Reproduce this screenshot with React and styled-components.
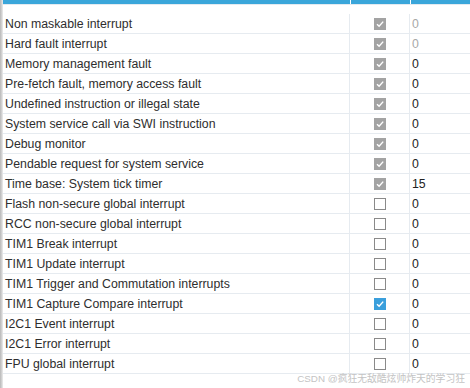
import React from 'react';
import styled, { createGlobalStyle } from 'styled-components';

const GlobalStyle = createGlobalStyle`
  html, body {
    margin: 0;
    padding: 0;
    background: #ffffff;
  }
  body {
    font-family: 'Liberation Sans', Arial, sans-serif;
  }
`;

const Page = styled.div`
  position: relative;
  width: 470px;
  height: 388px;
  overflow: hidden;
  display: flex;
  background: #ffffff;
`;

const Edge = styled.div`
  width: 3px;
  flex-shrink: 0;
  background: linear-gradient(to right, #b8b8b8, #d4d4d4 60%, #eeeeee);
`;

const Main = styled.div`
  flex: 1;
  display: flex;
  flex-direction: column;
`;

const HeaderBar = styled.div`
  display: grid;
  grid-template-columns: 347px 59px 1fr;
  column-gap: 1px;
  height: 4px;
  border-bottom: 1px solid #e3eaf0;
  background: #ffffff;
`;

const HeaderCell = styled.div`
  background: #3aa6da;
`;

const Spacer = styled.div`
  height: 9px;
`;

const Row = styled.div`
  display: grid;
  grid-template-columns: 347px 60px 1fr;
  height: 20px;
  border-bottom: 1px solid #e6ebf0;
  box-sizing: border-box;
`;

const NameCell = styled.div`
  display: flex;
  align-items: center;
  padding: 1px 0 0 2px;
  font-size: 12.3px;
  color: #2e2e2e;
  border-right: 1px solid #e6ebf0;
  white-space: nowrap;
`;

const CheckCell = styled.div`
  display: flex;
  align-items: center;
  justify-content: center;
  border-right: 1px solid #e6ebf0;
`;

const PrioCell = styled.div`
  display: flex;
  align-items: center;
  padding: 1px 0 0 2px;
  font-size: 12.3px;
  color: ${(p) => (p.$disabled ? '#a8a8a8' : '#222222')};
`;

const Box = styled.div`
  width: 12px;
  height: 12px;
  box-sizing: border-box;
  display: flex;
  align-items: center;
  justify-content: center;
  background: ${(p) => (p.$state === 'locked' ? '#a3a3a3' : p.$state === 'on' ? '#3a9fdc' : '#ffffff')};
  border: ${(p) => (p.$state === 'off' ? '1px solid #8a8a8a' : 'none')};
`;

const Watermark = styled.div`
  position: absolute;
  right: 5px;
  top: 371px;
  font-size: 9.8px;
  color: #c4c4c4;
  font-family: 'Liberation Sans', 'Noto Sans CJK SC', sans-serif;
  white-space: nowrap;
`;

const rows = [
  ['Non maskable interrupt', 'locked', '0', true],
  ['Hard fault interrupt', 'locked', '0', true],
  ['Memory management fault', 'locked', '0'],
  ['Pre-fetch fault, memory access fault', 'locked', '0'],
  ['Undefined instruction or illegal state', 'locked', '0'],
  ['System service call via SWI instruction', 'locked', '0'],
  ['Debug monitor', 'locked', '0'],
  ['Pendable request for system service', 'locked', '0'],
  ['Time base: System tick timer', 'locked', '15'],
  ['Flash non-secure global interrupt', 'off', '0'],
  ['RCC non-secure global interrupt', 'off', '0'],
  ['TIM1 Break interrupt', 'off', '0'],
  ['TIM1 Update interrupt', 'off', '0'],
  ['TIM1 Trigger and Commutation interrupts', 'off', '0'],
  ['TIM1 Capture Compare interrupt', 'on', '0'],
  ['I2C1 Event interrupt', 'off', '0'],
  ['I2C1 Error interrupt', 'off', '0'],
  ['FPU global interrupt', 'off', '0'],
];

function Check({ state }) {
  return (
    <Box $state={state}>
      {state !== 'off' && (
        <svg width="10" height="10" viewBox="0 0 10 10">
          <path d="M2 5.2 L4.1 7.3 L8.2 2.6" fill="none" stroke="#ffffff" strokeWidth="1.4" />
        </svg>
      )}
    </Box>
  );
}

export default function App() {
  return (
    <Page>
      <GlobalStyle />
      <Edge />
      <Main>
        <HeaderBar>
          <HeaderCell />
          <HeaderCell />
          <HeaderCell />
        </HeaderBar>
        <Spacer />
        {rows.map(([name, state, prio, disabled]) => (
          <Row key={name}>
            <NameCell>{name}</NameCell>
            <CheckCell>
              <Check state={state} />
            </CheckCell>
            <PrioCell $disabled={disabled}>{prio}</PrioCell>
          </Row>
        ))}
      </Main>
      <Watermark>CSDN @疯狂无敌酷炫帅炸天的学习狂</Watermark>
    </Page>
  );
}
